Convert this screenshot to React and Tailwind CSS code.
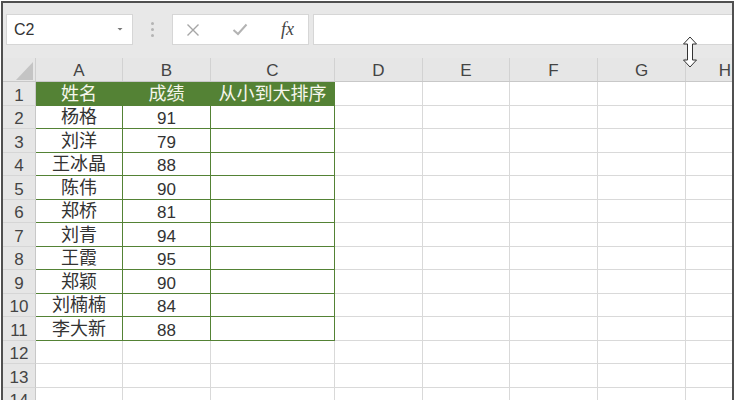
import { useMemo } from 'react';

const font = { fontFamily: "'Liberation Sans', 'Noto Sans CJK SC', sans-serif" };

const cols = ['A', 'B', 'C', 'D', 'E', 'F', 'G', 'H'];
const widths = ['w-[87px]', 'w-[88px]', 'w-[124px]', 'w-[88px]', 'w-[87px]', 'w-[88px]', 'w-[88px]', 'flex-1'];

const data = [
  ['杨格', '91'],
  ['刘洋', '79'],
  ['王冰晶', '88'],
  ['陈伟', '90'],
  ['郑桥', '81'],
  ['刘青', '94'],
  ['王霞', '95'],
  ['郑颖', '90'],
  ['刘楠楠', '84'],
  ['李大新', '88'],
];

const Toolbar = () => (
  <div className="h-[55px] bg-[#e8e8e8] flex items-start pt-[11px] pl-[3px] pr-0">
    {/* name box */}
    <div className="w-[127px] h-[31px] bg-white border border-[#d6d6d6] flex items-center pl-[7px] pr-[8px] text-[#333] text-[16px]">
      <span className="flex-1">C2</span>
      <svg width="8" height="5" viewBox="0 0 8 5">
        <path d="M1.5 1 L4 3.5 L6.5 1 Z" fill="#777" />
      </svg>
    </div>
    <div className="w-[39px] h-[31px] flex flex-col items-center justify-center gap-[3px]">
      <span className="w-[3px] h-[3px] rounded-full bg-[#b4b4b4]" />
      <span className="w-[3px] h-[3px] rounded-full bg-[#b4b4b4]" />
      <span className="w-[3px] h-[3px] rounded-full bg-[#b4b4b4]" />
    </div>
    {/* formula buttons */}
    <div className="w-[137px] h-[31px] bg-white border border-[#d6d6d6] flex items-center">
      <div className="w-[40px] flex justify-center">
        <svg width="14" height="14" viewBox="0 0 14 14">
          <path d="M1.5 1.5 L12.5 12.5 M12.5 1.5 L1.5 12.5" stroke="#a6a6a6" strokeWidth="1.4" />
        </svg>
      </div>
      <div className="w-[54px] flex justify-center">
        <svg width="16" height="13" viewBox="0 0 16 13">
          <path d="M1.5 7 L6 11 L14.5 1.5" stroke="#b3b3b3" strokeWidth="2" fill="none" />
        </svg>
      </div>
      <div className="flex-1 flex justify-center">
        <span className="italic text-[#444] text-[18px]" style={{ fontFamily: "'Liberation Serif', serif" }}>fx</span>
      </div>
    </div>
    {/* formula input */}
    <div className="ml-[4px] flex-1 h-[31px] bg-white border-t border-b border-l border-[#d6d6d6]" />
  </div>
);

const HeaderRow = () => (
  <div className="flex h-[24px] bg-[#e6e6e6] border-b border-[#c8c8c8]">
    <div className="w-[33px] relative border-r border-[#cfcfcf]">
      <svg className="absolute left-[13px] top-[4px]" width="17" height="18" viewBox="0 0 17 18">
        <path d="M17 0 L17 18 L0 18 Z" fill="#c4c4c4" />
      </svg>
    </div>
    {cols.map((c, i) => (
      <div
        key={c}
        className={`${widths[i]} flex items-center justify-center pt-[2px] text-[17px] text-[#444] ${i < 7 ? 'border-r border-[#d2d2d2]' : 'justify-end pr-[1px] overflow-hidden'}`}
      >
        {c}
      </div>
    ))}
  </div>
);

const Row = ({ n }) => {
  const inTable = n <= 11;
  return (
    <div className="flex h-[23.5px]">
      <div className="w-[33px] bg-[#e6e6e6] border-r border-[#c8c8c8] border-b border-b-[#d6d6d6] flex items-end justify-center pb-[1px] leading-none text-[17px] text-[#444]">
        {n}
      </div>
      {cols.map((c, i) => {
        const green = inTable && i < 3;
        let text = '';
        if (n === 1 && i === 0) text = '姓名';
        if (n === 1 && i === 1) text = '成绩';
        if (n === 1 && i === 2) text = '从小到大排序';
        if (n >= 2 && n <= 11 && i < 2) text = data[n - 2][i];
        const border = green
          ? 'border-r border-b border-[#548235]'
          : i < 7
          ? 'border-r border-b border-[#d9d9d9]'
          : 'border-b border-[#d9d9d9]';
        const header = n === 1 && i < 3;
        const size = i === 1 && !header ? 'text-[17px] pb-[1px]' : 'text-[18px] pb-[2px]';
        return (
          <div
            key={c}
            className={`${widths[i]} ${border} ${size} leading-none flex items-end justify-center ${
              header ? 'bg-[#548235] text-[#f6f6ec]' : 'text-[#333]'
            }`}
          >
            {text}
          </div>
        );
      })}
    </div>
  );
};

const ResizeCursor = () => (
  <svg className="absolute left-[682px] top-[36px]" width="16" height="32" viewBox="0 0 16 32">
    <path
      d="M8 1 L14.5 8 L10.5 8 L10.5 24 L14.5 24 L8 31 L1.5 24 L5.5 24 L5.5 8 L1.5 8 Z"
      fill="#ffffff"
      stroke="#333"
      strokeWidth="1"
      strokeLinejoin="miter"
    />
  </svg>
);

const App = () => {
  const rows = useMemo(() => Array.from({ length: 15 }, (_, i) => i + 1), []);
  return (
    <div className="w-[736px] h-[400px] overflow-hidden bg-white relative" style={font}>
      <div className="ml-px mt-px mr-[2px] h-[399px] border-l-2 border-r-2 border-t-2 border-[#505050] overflow-hidden">
        <Toolbar />
        <HeaderRow />
        {rows.map((n) => (
          <Row key={n} n={n} />
        ))}
      </div>
      <ResizeCursor />
    </div>
  );
};

export default App;
